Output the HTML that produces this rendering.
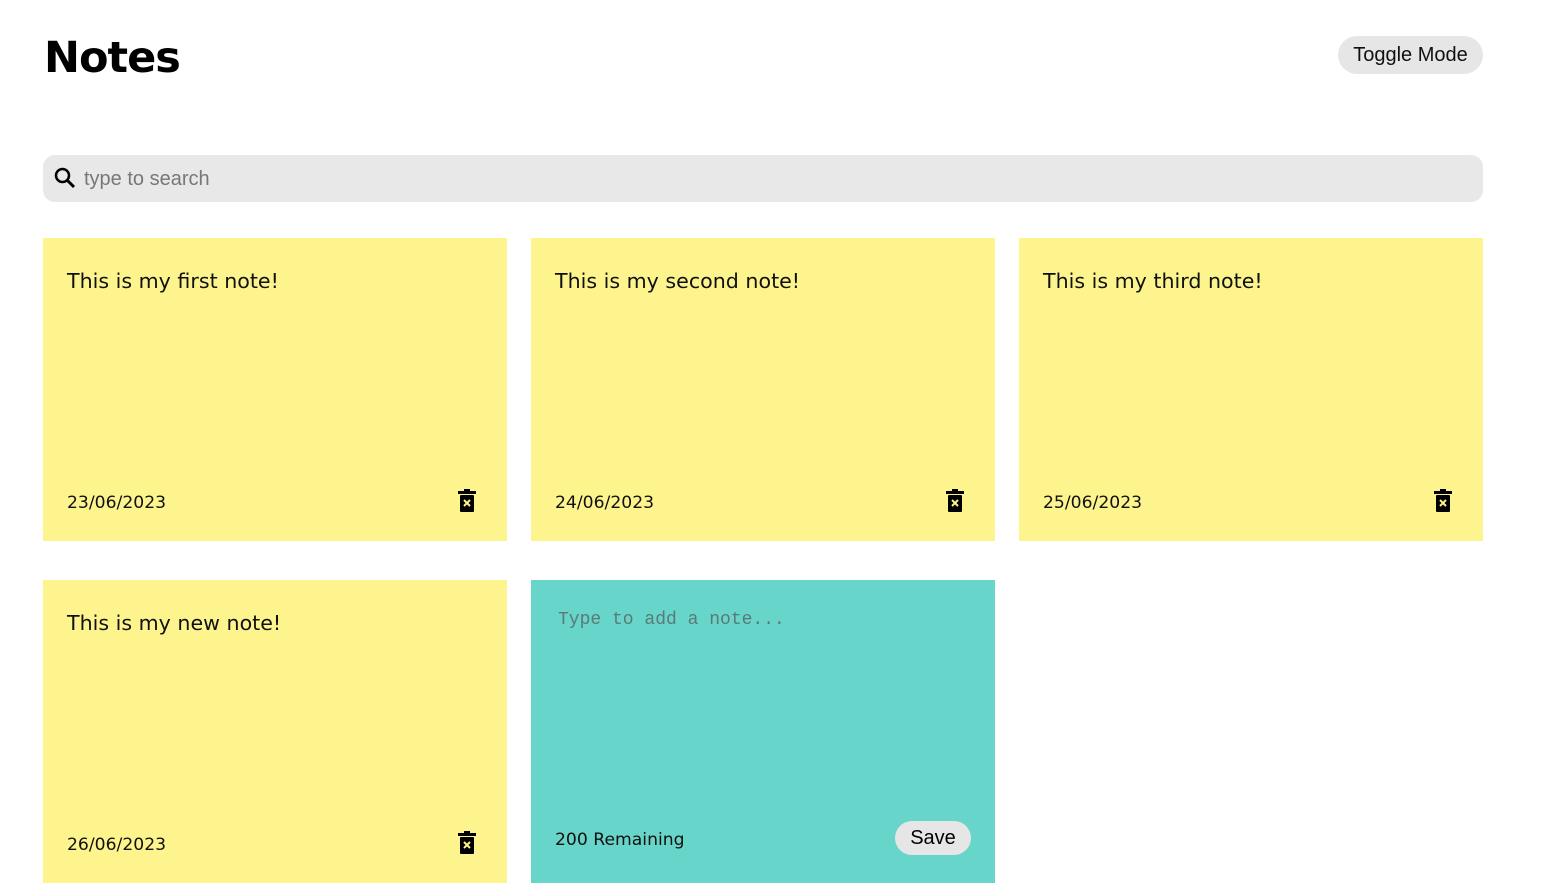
<!DOCTYPE html>
<html><head><style>
body{margin:0;background:#fff;font-family:"DejaVu Sans","Liberation Sans",sans-serif;width:1550px;height:844px;overflow:hidden;position:relative}
h1{position:absolute;left:44px;top:33px;margin:0;font-size:43px;font-weight:bold;font-family:"DejaVu Sans",sans-serif;letter-spacing:-1px}
.tog{position:absolute;left:1338px;top:36px;width:145px;height:38px;border-radius:19px;background:#e6e6e6;font:20px "Liberation Sans",sans-serif;display:flex;align-items:center;justify-content:center;color:#111}
.search{position:absolute;left:43px;top:155px;width:1440px;height:47px;border-radius:12px;background:#e8e8e8}
.search span{position:absolute;left:41px;top:13px;font:20px "Liberation Sans",sans-serif;color:#777}
.card{position:absolute;width:464px;height:303px;background:#fdf48d}
.t{position:absolute;left:24px;top:31px;font-size:20.6px;color:#111}
.d{position:absolute;left:24px;top:255px;font-size:17.2px;color:#111}
.tr{position:absolute;left:415px;top:251px}
</style></head><body>
<h1>Notes</h1>
<div class="tog">Toggle Mode</div>
<div class="search"><svg style="position:absolute;left:10px;top:11px" width="24" height="24" viewBox="0 0 24 24"><circle cx="9.5" cy="9.5" r="6.5" fill="none" stroke="#000" stroke-width="2.5"/><line x1="14" y1="14" x2="21" y2="21" stroke="#000" stroke-width="3"/></svg><span>type to search</span></div>

<div class="card" style="left:43px;top:238px"><div class="t">This is my first note!</div><div class="d">23/06/2023</div><svg class="tr" width="18" height="24" viewBox="0 0 18 24"><rect x="6" y="0" width="6" height="3" fill="#000"/><rect x="0" y="2" width="18" height="3" fill="#000"/><rect x="2" y="6" width="14" height="17" rx="1" fill="#000"/><path d="M6 11l6 6M12 11l-6 6" stroke="#fdf48d" stroke-width="2"/></svg></div>
<div class="card" style="left:531px;top:238px"><div class="t">This is my second note!</div><div class="d">24/06/2023</div><svg class="tr" width="18" height="24" viewBox="0 0 18 24"><rect x="6" y="0" width="6" height="3" fill="#000"/><rect x="0" y="2" width="18" height="3" fill="#000"/><rect x="2" y="6" width="14" height="17" rx="1" fill="#000"/><path d="M6 11l6 6M12 11l-6 6" stroke="#fdf48d" stroke-width="2"/></svg></div>
<div class="card" style="left:1019px;top:238px"><div class="t">This is my third note!</div><div class="d">25/06/2023</div><svg class="tr" width="18" height="24" viewBox="0 0 18 24"><rect x="6" y="0" width="6" height="3" fill="#000"/><rect x="0" y="2" width="18" height="3" fill="#000"/><rect x="2" y="6" width="14" height="17" rx="1" fill="#000"/><path d="M6 11l6 6M12 11l-6 6" stroke="#fdf48d" stroke-width="2"/></svg></div>
<div class="card" style="left:43px;top:580px"><div class="t">This is my new note!</div><div class="d">26/06/2023</div><svg class="tr" width="18" height="24" viewBox="0 0 18 24"><rect x="6" y="0" width="6" height="3" fill="#000"/><rect x="0" y="2" width="18" height="3" fill="#000"/><rect x="2" y="6" width="14" height="17" rx="1" fill="#000"/><path d="M6 11l6 6M12 11l-6 6" stroke="#fdf48d" stroke-width="2"/></svg></div>
<div class="card" style="left:531px;top:580px;background:#67d5ca"><div style="position:absolute;left:27px;top:30px;font:18px 'Liberation Mono',monospace;color:#5a7a78">Type to add a note...</div><div class="d" style="top:250px">200 Remaining</div><div style="position:absolute;left:364px;top:241px;width:76px;height:34px;border-radius:17px;background:#e6e6e6;font:20px 'Liberation Sans',sans-serif;text-align:center;line-height:34px">Save</div></div>
</body></html>
